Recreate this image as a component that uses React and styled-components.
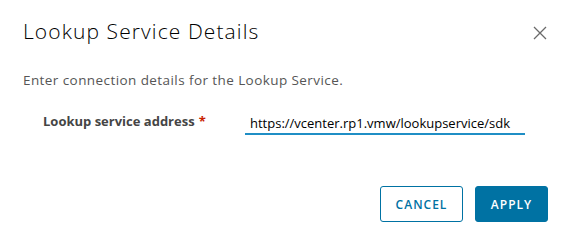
import React from "react";
import styled, { createGlobalStyle } from "styled-components";

const Global = createGlobalStyle`
  html, body { margin: 0; padding: 0; background: #fff; }
  body { font-family: "Open Sans", "Noto Sans", sans-serif; }
`;

const Dialog = styled.div`
  width: 568px;
  height: 242px;
  box-sizing: border-box;
  padding: 16px 20px 0 23px;
  display: flex;
  flex-direction: column;
`;

const Header = styled.div`
  display: flex;
  align-items: center;
  justify-content: space-between;
  height: 30px;
`;

const Title = styled.h1`
  margin: 0;
  font-family: "Open Sans", sans-serif;
  font-weight: 300;
  font-size: 21px;
  letter-spacing: 1.1px;
  line-height: 30px;
  color: #000;
`;

const CloseButton = styled.button`
  border: none;
  background: none;
  padding: 0;
  width: 14px;
  height: 14px;
  display: flex;
  margin-top: 4px;
  margin-right: 1px;
  cursor: pointer;
`;

const Subtitle = styled.p`
  margin: 25px 0 0 0;
  font-size: 13.5px;
  letter-spacing: 0.42px;
  line-height: 18px;
  color: #565656;
`;

const Row = styled.div`
  display: flex;
  align-items: flex-start;
  margin-top: 23px;
  padding-left: 20px;
`;

const Label = styled.label`
  width: 202px;
  font-size: 13px;
  font-weight: 700;
  color: #454545;
  line-height: 18px;
`;

const Required = styled.span`
  color: #c92100;
  margin-left: 4px;
`;

const Input = styled.input`
  width: 280px;
  box-sizing: border-box;
  margin-top: 3px;
  border: none;
  border-bottom: 2px solid #1f8ec5;
  outline: none;
  padding: 0 5px 2px 5px;
  font-family: "Open Sans", sans-serif;
  font-size: 13px;
  line-height: 18px;
  height: 20px;
  color: #000;
  background: transparent;
`;

const Footer = styled.div`
  display: flex;
  justify-content: flex-end;
  gap: 12px;
  margin-top: auto;
  margin-bottom: 20px;
`;

const Button = styled.button`
  height: 36px;
  padding: 0 ${(p) => (p.$primary ? "13px" : "12px")};
  min-width: ${(p) => (p.$primary ? "73px" : "83px")};
  border: 1px solid #0072a3;
  border-radius: 3px;
  background: ${(p) => (p.$primary ? "#0072a3" : "#fff")};
  color: ${(p) => (p.$primary ? "#fff" : "#0072a3")};
  font-family: "Open Sans", sans-serif;
  font-size: 12px;
  font-weight: 600;
  letter-spacing: 1px;
  cursor: pointer;
`;

export default function App() {
  return (
    <>
      <Global />
      <Dialog>
        <Header>
          <Title>Lookup Service Details</Title>
          <CloseButton aria-label="Close">
            <svg width="14" height="14" viewBox="0 0 14 14">
              <path d="M1 1 L13 13 M13 1 L1 13" stroke="#6a6a6a" strokeWidth="1.3" fill="none" />
            </svg>
          </CloseButton>
        </Header>
        <Subtitle>Enter connection details for the Lookup Service.</Subtitle>
        <Row>
          <Label>
            Lookup service address<Required>*</Required>
          </Label>
          <Input defaultValue="https://vcenter.rp1.vmw/lookupservice/sdk" />
        </Row>
        <Footer>
          <Button>CANCEL</Button>
          <Button $primary>APPLY</Button>
        </Footer>
      </Dialog>
    </>
  );
}
